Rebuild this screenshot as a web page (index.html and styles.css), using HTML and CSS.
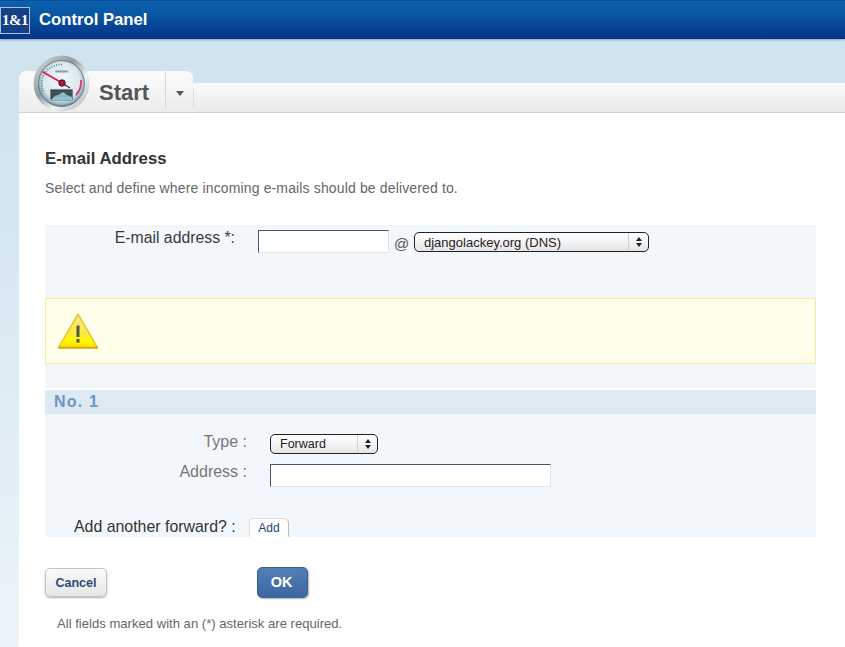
FILE: index.html
```html
<!DOCTYPE html>
<html lang="en">
<head>
<meta charset="utf-8">
<title>Control Panel</title>
<link rel="stylesheet" href="styles.css">
</head>
<body>
<header class="topbar">
  <span class="logo">1&amp;1</span>
  <span class="brand">Control Panel</span>
</header>
<div class="shell">
  <nav class="tabbar">
    <div class="tab">
      <svg class="gauge" width="58" height="58" viewBox="0 0 58 58" aria-hidden="true">
        <defs>
          <linearGradient id="rim" x1="0" y1="0" x2="1" y2="1">
            <stop offset="0" stop-color="#dfe4e6"/><stop offset=".4" stop-color="#8f999f"/><stop offset=".65" stop-color="#f1f3f4"/><stop offset="1" stop-color="#a3aaae"/>
          </linearGradient>
          <radialGradient id="dial" cx=".5" cy=".45" r=".56">
            <stop offset="0" stop-color="#f5f8f9"/><stop offset=".72" stop-color="#dbe7eb"/><stop offset=".9" stop-color="#8fb0ba"/><stop offset="1" stop-color="#3f6a78"/>
          </radialGradient>
        </defs>
        <circle cx="28.500" cy="28.500" r="28" fill="url(#rim)"/>
        <circle cx="28.500" cy="28.500" r="23" fill="url(#dial)" stroke="#55707b" stroke-width=".8"/>
        <path d="M10 36A19.500 19.500 0 0 1 29 9.500" fill="none" stroke="#2f7f94" stroke-width="1.500" stroke-dasharray="1 1.500"/>
        <path d="M48 25A19.500 19.500 0 0 1 43 40" fill="none" stroke="#e6306f" stroke-width="1.800"/>
        <rect x="22" y="15.500" width="13" height="2" rx="1" fill="#8a9aa1"/>
        <rect x="17" y="34" width="23" height="12" fill="#3e4a50" stroke="#d8dfe2" stroke-width=".8"/>
        <path d="M18 45L22 41L26 39.500L30 37L34 40L39 42V45.500H18Z" fill="#8fc5d6"/>
        <path d="M17 37.500H40M17 41H40" stroke="#66767d" stroke-width=".4"/>
        <path d="M10 17L29 28" stroke="#d81e50" stroke-width="1.800" stroke-linecap="round"/>
        <path d="M29 28L37 33" stroke="#4a2430" stroke-width="1.200"/>
        <circle cx="29" cy="28" r="3.200" fill="#b3153f" stroke="#3d1420" stroke-width="1"/>
      </svg>
      <span class="tab-title">Start</span>
      <span class="tab-menu"><span class="caret"></span></span>
    </div>
    <div class="strip"></div>
  </nav>
  <main class="content">
    <h1 class="title">E-mail Address</h1>
    <p class="intro">Select and define where incoming e-mails should be delivered to.</p>
    <section class="panel">
      <div class="mail-row">
        <label class="mail-label">E-mail address *:</label>
        <span class="field field-mail"></span>
        <span class="at">@</span>
        <div class="select select-domain">
          <span class="select-text">djangolackey.org (DNS)</span>
          <span class="stepper"><span class="up"></span><span class="down"></span></span>
        </div>
      </div>
      <div class="warning">
        <svg class="warn-icon" width="40" height="36" viewBox="0 0 40 36" aria-hidden="true">
          <defs>
            <linearGradient id="warn" x1="0" y1="0" x2="0" y2="1">
              <stop offset="0" stop-color="#f7e38a"/><stop offset=".55" stop-color="#fbe94a"/><stop offset=".8" stop-color="#fff600"/><stop offset="1" stop-color="#f5e400"/>
            </linearGradient>
          </defs>
          <path d="M20 1L39.500 34.500H.5Z" fill="url(#warn)" stroke="#e3b90c" stroke-width="1.200" stroke-linejoin="round"/>
          <path d="M0 34.800H40" stroke="#d5a90a" stroke-width="2"/>
          <rect x="18.500" y="12.500" width="3" height="11.500" fill="#55554a"/>
          <rect x="18.500" y="26" width="3" height="3.500" fill="#55554a"/>
        </svg>
      </div>
      <h2 class="subhead">No. 1</h2>
      <div class="forward">
        <div class="form-row row-type">
          <label class="form-label">Type :</label>
          <div class="select select-type">
            <span class="select-text">Forward</span>
            <span class="stepper"><span class="up"></span><span class="down"></span></span>
          </div>
        </div>
        <div class="form-row row-address">
          <label class="form-label">Address :</label>
          <span class="field field-address"></span>
        </div>
        <div class="add-row">
          <label class="add-label">Add another forward? :</label>
          <button class="btn-add" type="button">Add</button>
        </div>
      </div>
    </section>
    <div class="actions">
      <button class="btn-cancel" type="button">Cancel</button>
      <button class="btn-ok" type="button">OK</button>
    </div>
    <p class="note">All fields marked with an (*) asterisk are required.</p>
  </main>
</div>
</body>
</html>
```

FILE: styles.css
```css
* { box-sizing: border-box; }
html, body { margin: 0; height: 100%; }
body {
  width: 845px;
  height: 647px;
  overflow: hidden;
  display: flex;
  flex-direction: column;
  font-family: "Liberation Sans", Arial, sans-serif;
  background: linear-gradient(#cfe3ef 0, #d3e6f1 200px, #edf5fa 647px);
  color: #333;
}
.topbar {
  height: 39px;
  flex: none;
  display: flex;
  align-items: center;
  background: linear-gradient(#0b62ae 0, #0a56a3 35%, #04348a 100%);
  border-top: 1px solid #0d4c96;
  box-shadow: 0 1px 2px rgba(20, 50, 90, .35);
}
.logo {
  width: 30px;
  height: 27px;
  border: 1px solid #a9c0dc;
  background: #173f86;
  color: #fff;
  font: bold 15px/25px "Liberation Serif", serif;
  text-align: center;
  letter-spacing: -.5px;
}
.brand {
  margin-left: 9px;
  color: #fff;
  font-size: 16.700px;
  font-weight: bold;
}
.shell {
  flex: 1;
  display: flex;
  flex-direction: column;
  padding: 32px 0 0 19px;
  min-height: 0;
}
.tabbar { display: flex; height: 42px; flex: none; }
.tab {
  position: relative;
  width: 174px;
  display: flex;
  align-items: flex-start;
  padding-left: 80px;
  border-radius: 7px 7px 0 0;
  background: linear-gradient(#fbfbfb 0, #f6f6f6 40%, #ececec 100%);
  border-bottom: 1px solid #d2d2d2;
}
.gauge { position: absolute; left: 14px; top: -16px; }
.tab-title {
  width: 66px;
  flex: none;
  padding-top: 9px;
  color: #555;
  font-size: 22px;
  line-height: 26px;
  font-weight: bold;
}
.tab-menu {
  width: 28px;
  height: 37px;
  flex: none;
  display: flex;
  align-items: center;
  justify-content: center;
  padding-top: 7px;
  border-left: 1px solid #d6d6d6;
}
.caret {
  width: 0;
  height: 0;
  border: 4px solid transparent;
  border-top: 5px solid #555;
  border-bottom: 0;
}
.strip {
  flex: 1;
  margin-top: 12px;
  background:
    linear-gradient(#e0e0e0, #e0e0e0) 0 5px / 1px 20px no-repeat,
    linear-gradient(#fbfbfb 0, #f2f2f2 50%, #ebebeb 100%);
  border-bottom: 1px solid #d0d0d0;
}
.content {
  flex: 1;
  min-height: 0;
  padding: 36px 29px 0 26px;
  background: #fff;
}
.title {
  margin: 0;
  font-size: 16.800px;
  line-height: 19px;
  font-weight: bold;
  color: #333;
}
.intro {
  margin: 12px 0 0;
  font-size: 14px;
  letter-spacing: .14px;
  line-height: 16px;
  color: #666;
}
.panel {
  margin-top: 29px;
  height: 312px;
  overflow: hidden;
  background: #f2f7fc;
}
.mail-row {
  height: 73px;
  display: flex;
  align-items: flex-start;
  padding-top: 4px;
}
.mail-label {
  width: 190px;
  flex: none;
  text-align: right;
  font-size: 15.800px;
  line-height: 18px;
  color: #3a3a3a;
}
.field {
  display: block;
  background: #fff;
  border: 1px solid #e2e4ea;
  border-top-color: #4a5470;
  border-left-color: #4a5470;
}
.field-mail { width: 131px; height: 23px; margin: 1px 0 0 23px; }
.at {
  width: 25px;
  padding: 6px 0 0 5px;
  font-size: 15px;
  line-height: 17px;
  color: #555;
}
.select {
  height: 20px;
  display: flex;
  align-items: center;
  border: 1px solid #222;
  border-radius: 5px;
  background: linear-gradient(#fff 0, #f4f4f4 50%, #e4e4e4 100%);
  font-size: 13px;
  color: #222;
}
.select-domain { width: 235px; margin-top: 3px; }
.select-type { width: 108px; font-size: 12.500px; }
.select-text { flex: 1; padding-left: 9px; }
.stepper {
  width: 20px;
  height: 100%;
  flex: none;
  display: flex;
  flex-direction: column;
  align-items: center;
  justify-content: center;
  gap: 2px;
  border-left: 1px solid #d0d0d0;
}
.up, .down { width: 0; height: 0; border: 3px solid transparent; }
.up { border-top: 0; border-bottom: 4px solid #222; }
.down { border-bottom: 0; border-top: 4px solid #222; }
.warning {
  height: 66px;
  padding: 14px 0 0 12px;
  background: #fffeea;
  border: 1px solid #f7e8a4;
}
.warn-icon { display: block; }
.subhead {
  margin: 24px 0 0;
  height: 26px;
  padding-left: 9px;
  border-top: 2px solid #fff;
  background: #dde9f3;
  color: #6e95c4;
  font-size: 16px;
  line-height: 23px;
  font-weight: bold;
  letter-spacing: 1.200px;
}
.form-row { display: flex; align-items: flex-start; }
.form-label {
  width: 202px;
  flex: none;
  text-align: right;
  font-size: 16px;
  line-height: 16px;
  color: #777;
}
.row-type { margin-top: 20px; height: 30px; }
.row-type .select { margin-left: 23px; }
.row-address { height: 23px; }
.field-address { width: 281px; height: 23px; margin-left: 23px; }
.add-row { display: flex; align-items: flex-start; margin-top: 31px; padding-left: 29px; }
.add-label {
  width: 175px;
  flex: none;
  padding-top: 1px;
  font-size: 15.900px;
  line-height: 16px;
  color: #333;
}
.btn-add {
  width: 40px;
  height: 22px;
  padding: 0 0 3px;
  border: 1px solid #ddd;
  border-right-color: #bbb;
  border-bottom-color: #bbb;
  border-radius: 5px;
  background: #fff;
  color: #24457e;
  font: 12px "Liberation Sans", Arial, sans-serif;
}
.actions { display: flex; align-items: center; margin-top: 30px; }
.btn-cancel {
  width: 62px;
  height: 29px;
  padding: 0;
  border: 1px solid #c4c4c4;
  border-radius: 5px;
  background: linear-gradient(#fafafa, #e6e6e6);
  box-shadow: 0 1px 2px rgba(0, 0, 0, .3);
  color: #2f4a78;
  font: bold 12.500px "Liberation Sans", Arial, sans-serif;
}
.btn-ok {
  width: 51px;
  height: 31px;
  margin-left: 150px;
  padding: 0 2px 2px 0;
  border: 1px solid #3a5f92;
  border-radius: 5px;
  background: linear-gradient(#5180b7, #3c669f);
  box-shadow: 1px 1px 2px rgba(0, 0, 0, .3);
  color: #fff;
  font: bold 14.500px "Liberation Sans", Arial, sans-serif;
}
.note {
  margin: 18px 0 0 12px;
  font-size: 13.100px;
  line-height: 15px;
  color: #666;
}
```
